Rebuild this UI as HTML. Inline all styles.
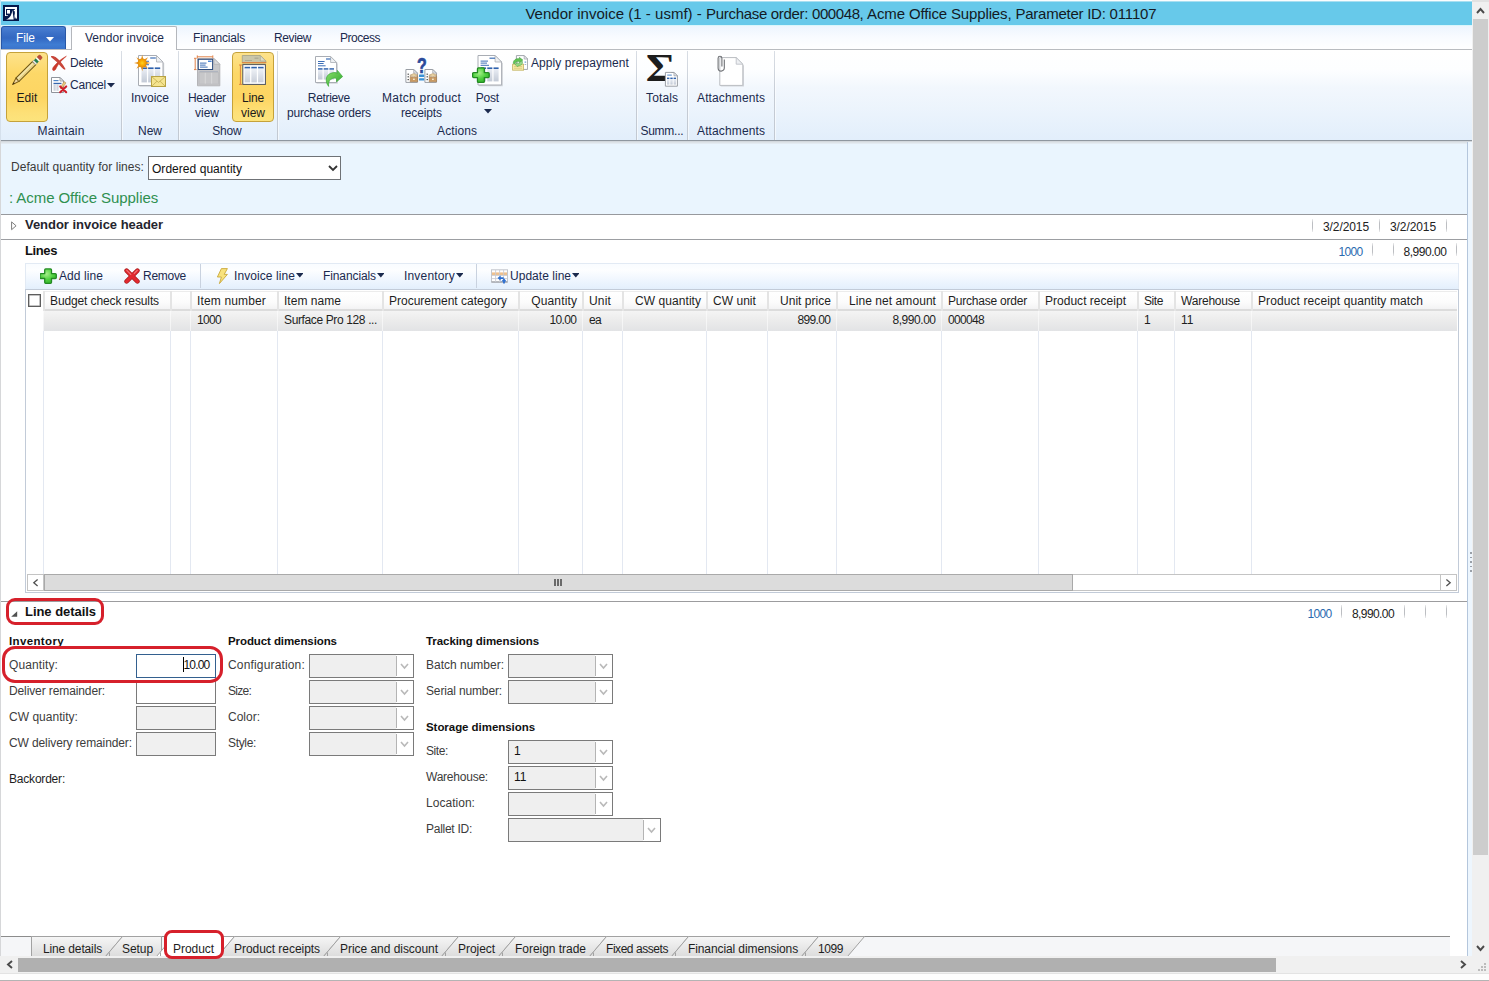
<!DOCTYPE html>
<html lang="en">
<head>
<meta charset="utf-8">
<title>Vendor invoice (1 - usmf) - Purchase order: 000048, Acme Office Supplies, Parameter ID: 011107</title>
<style>
html,body{margin:0;padding:0;}
body{width:1489px;height:981px;overflow:hidden;background:#fff;font-family:"Liberation Sans", sans-serif;font-size:12px;color:#1e1e1e;position:relative;}
#app{position:absolute;left:0;top:0;width:1489px;height:981px;overflow:hidden;}
#app div,#app span,#app svg{position:absolute;box-sizing:border-box;}
#app span{white-space:pre;}
#app span span{position:static;}

</style>
</head>
<body>
<div id="app">
<div style="left:0px;top:0px;width:1472px;height:26px;background:#67c9ea;"></div>
<div style="left:0px;top:0px;width:1489px;height:1px;background:#fbfdfe;"></div>
<div style="left:0px;top:1px;width:1472px;height:1px;background:#a9dff1;"></div>
<div style="left:0px;top:25px;width:1472px;height:1px;background:#d9f6fb;"></div>
<div style="left:0px;top:0px;width:1px;height:981px;background:linear-gradient(#c4e8f6 26px,#d5e0ec 26px,#d5e0ec 140px,#d6d7d9 140px);"></div>
<svg style="left:3px;top:5px" width="16" height="16" viewBox="0 0 16 16"><rect width="16" height="16" fill="#04184a"/><path d="M2 2h12v8.5l-1 2.5-1.2-1.5V4H3v6.2h2.4L4.5 11H2z" fill="#fff"/><rect x="4" y="5" width="3" height="3.6" fill="#fff"/><path d="M3 14.5c4-1.5 5.5-4 6.4-9.5l1.3 9.5z" fill="#fff"/><rect x="10.8" y="5" width="1.2" height="1.2" fill="#fff"/><rect x="11.6" y="9.5" width="1" height="4" fill="#fff"/><rect x="13" y="10" width="1" height="3.6" fill="#fff"/></svg>
<span style="left:525.4px;top:4px;line-height:20px;font-size:15px;color:#141a24;"><span style="letter-spacing:0.02px">Vendor invoice (1 - usmf) - </span><span style="letter-spacing:-0.31px">Purchase order: </span><span style="letter-spacing:-0.41px">000048, </span><span style="letter-spacing:-0.14px">Acme Office Supplies, </span><span style="letter-spacing:-0.25px">Parameter ID: </span><span style="letter-spacing:-0.14px">011107</span></span>
<div style="left:1px;top:26px;width:1471px;height:24px;background:linear-gradient(#edf5fe,#f8fbff 45%,#ffffff);"></div>
<div style="left:1px;top:50px;width:1471px;height:90px;background:linear-gradient(#ffffff,#fdfeff 22%,#f2f7fd 42%,#eaf3fc 72%,#e2eefb);"></div>
<div style="left:1px;top:49px;width:1471px;height:1px;background:#b9bcc0;"></div>
<div style="left:1px;top:140px;width:1471px;height:1px;background:#8f979f;"></div>
<div style="left:1px;top:141px;width:1471px;height:1px;background:#d3d8dd;"></div>
<div style="left:1px;top:142px;width:1471px;height:1px;background:#dde3e8;"></div>
<div style="left:1px;top:143px;width:1471px;height:1px;background:#e4ebf2;"></div>
<div style="left:1px;top:26px;width:65px;height:23px;border-radius:3px 3px 0 0;background:linear-gradient(#4b80d2,#3b70c7 30%,#3368c2 50%,#3f7dd3 80%,#3b74cb);border:1px solid #2857a6;border-bottom:none;"></div>
<span style="left:15.96px;top:30px;line-height:16px;color:#ffffff;letter-spacing:-0.09px;">File</span>
<svg style="left:46px;top:37px" width="8" height="5" viewBox="0 0 8 5"><path d="M0 0h8L4 4.5z" fill="#fff"/></svg>
<div style="left:71px;top:26px;width:106px;height:24px;background:#fff;border:1px solid #b4b7bc;border-bottom:none;border-radius:2px 2px 0 0;"></div>
<span style="left:85px;top:30px;line-height:16px;color:#1b2a4e;letter-spacing:0.02px;">Vendor invoice</span>
<span style="left:193px;top:30px;line-height:16px;color:#1b2a4e;letter-spacing:-0.2px;">Financials</span>
<span style="left:274px;top:30px;line-height:16px;color:#1b2a4e;letter-spacing:-0.39px;">Review</span>
<span style="left:340px;top:30px;line-height:16px;color:#1b2a4e;letter-spacing:-0.48px;">Process</span>
<div style="left:121px;top:51px;width:1px;height:89px;background:linear-gradient(#d9dee5,#c6ccd5 50%,#c2c9d2);"></div>
<div style="left:122px;top:51px;width:1px;height:89px;background:rgba(255,255,255,.55);"></div>
<div style="left:178px;top:51px;width:1px;height:89px;background:linear-gradient(#d9dee5,#c6ccd5 50%,#c2c9d2);"></div>
<div style="left:179px;top:51px;width:1px;height:89px;background:rgba(255,255,255,.55);"></div>
<div style="left:277px;top:51px;width:1px;height:89px;background:linear-gradient(#d9dee5,#c6ccd5 50%,#c2c9d2);"></div>
<div style="left:278px;top:51px;width:1px;height:89px;background:rgba(255,255,255,.55);"></div>
<div style="left:636px;top:51px;width:1px;height:89px;background:linear-gradient(#d9dee5,#c6ccd5 50%,#c2c9d2);"></div>
<div style="left:637px;top:51px;width:1px;height:89px;background:rgba(255,255,255,.55);"></div>
<div style="left:687px;top:51px;width:1px;height:89px;background:linear-gradient(#d9dee5,#c6ccd5 50%,#c2c9d2);"></div>
<div style="left:688px;top:51px;width:1px;height:89px;background:rgba(255,255,255,.55);"></div>
<div style="left:774px;top:51px;width:1px;height:89px;background:linear-gradient(#d9dee5,#c6ccd5 50%,#c2c9d2);"></div>
<div style="left:775px;top:51px;width:1px;height:89px;background:rgba(255,255,255,.55);"></div>
<div style="left:6px;top:52px;width:42px;height:70px;background:linear-gradient(#fde28c,#fdd868 30%,#fdd562 65%,#fde077 88%,#fce47c);border:1px solid #c5a23a;border-radius:4px;"></div>
<svg style="left:10px;top:53px" width="36" height="36" viewBox="0 0 36 36"><g transform="translate(2.6,31.6) rotate(-45)"><path d="M0 0L7 -2.2V2.2z" fill="#f0d6a2" stroke="#7c5d14" stroke-width="1" stroke-linejoin="round"/><path d="M0 0L2.4 -.8V.8z" fill="#3a2a10"/><rect x="7" y="-2.2" width="23.4" height="4.4" fill="#f5e6a8" stroke="#6f5716" stroke-width="1.1"/><rect x="7" y=".3" width="23.4" height="1.4" fill="#e6cf80"/><rect x="30.4" y="-2.2" width="2" height="4.4" fill="#e6e8e4" stroke="#8a8a80" stroke-width=".5"/><rect x="32.4" y="-2.2" width="2.6" height="4.4" fill="#1f7d50"/><rect x="35" y="-2.2" width="1.8" height="4.4" fill="#f4f4f0"/><path d="M36.8 -2.2h2a1.6 1.6 0 0 1 1.6 1.6v1.2a1.6 1.6 0 0 1 -1.6 1.6h-2z" fill="#bf4a3a" stroke="#9a4a30" stroke-width=".4"/></g></svg>
<svg style="left:50px;top:55px" width="18" height="17" viewBox="0 0 18 17"><path d="M16.4 1.2C12.5 3 6.5 7.6 3 12.6 2 14.4 2.6 16 4 15.6 5.4 15.2 6 13.6 6.6 12.4 8.6 8.6 12 4.8 16.4 1.2z" fill="#c93a2c" stroke="#c93a2c" stroke-width=".5" stroke-linejoin="round"/><path d="M1.6 1.6C3.6 1.4 6.2 2.8 8.8 5.8 11.2 8.6 13.4 11.6 14.8 14 14 14 13 13 12 11.8 9.4 8.6 6 4.8 1.6 1.6z" fill="#c8463a" stroke="#c8463a" stroke-width="1.3" stroke-linejoin="round"/></svg>
<svg style="left:51px;top:77px" width="17" height="17" viewBox="0 0 17 17"><path d="M0.5 0.5H9.0L12.5 4.0V15.5H0.5z" fill="#fff" stroke="#8f949b" stroke-width="1"/><path d="M9.0 0.5V4.0H12.5z" fill="#eef0f3" stroke="#8f949b" stroke-width="0.8" stroke-linejoin="round"/><rect x="2.5" y="3" width="5.0" height="1.2" fill="#4f86c8"/><rect x="2.5" y="5.8" width="8" height="1.3" fill="#3567ae"/><rect x="2.5" y="7.3" width="2.2" height="6.5" fill="#cfd5de"/><rect x="5.4" y="7.3" width="2.2" height="6.5" fill="#cfd5de"/><path d="M13 4.5l2 1.4-4 5.6-1.6.4.2-1.6z" fill="#e6c97a" stroke="#b07a4a" stroke-width=".5"/><path d="M9.2 9.4l6 5.8M15.2 9.4l-6 5.8" stroke="#cf1f2a" stroke-width="2.1" stroke-linecap="round"/></svg>
<svg style="left:134px;top:54px" width="33" height="34" viewBox="0 0 33 34"><path d="M5.5 32.1H29.6V9.0" fill="none" stroke="#c9ccd1" stroke-width="1.2" opacity=".8"/><path d="M4.5 1.5H22.5L29 8.0V31.5H4.5z" fill="#fff" stroke="#a9adb4" stroke-width="1"/><path d="M22.5 1.5V8.0H29z" fill="#eef0f3" stroke="#a9adb4" stroke-width="0.8" stroke-linejoin="round"/><rect x="16.2" y="3.4" width="5.600000000000001" height="1.2" fill="#3e6fb6"/><rect x="10.5" y="6.8" width="4.5" height="1" fill="#3e6fb6"/><rect x="10.5" y="10.2" width="4.5" height="1" fill="#3e6fb6"/><defs><linearGradient id="tbi" x1="0" y1="0" x2="0" y2="1"><stop offset="0" stop-color="#e9edf4"/><stop offset="1" stop-color="#c3cad6"/></linearGradient></defs><rect x="7.50" y="13.4" width="5.43" height="1.6" fill="#2f62ad"/><rect x="7.50" y="15.0" width="5.43" height="13.40" fill="url(#tbi)"/><rect x="14.13" y="13.4" width="5.43" height="1.6" fill="#2f62ad"/><rect x="14.13" y="15.0" width="5.43" height="13.40" fill="url(#tbi)"/><rect x="20.77" y="13.4" width="5.43" height="1.6" fill="#2f62ad"/><rect x="20.77" y="15.0" width="5.43" height="13.40" fill="url(#tbi)"/><defs><radialGradient id="sun"><stop offset="0" stop-color="#ffd21f"/><stop offset=".6" stop-color="#f7a600"/><stop offset="1" stop-color="#e08a10"/></radialGradient></defs><g transform="translate(8.2,9)"><path d="M0 -8.2L1.5 -2.5h-3z" fill="#e39322" transform="rotate(0)"/><path d="M0 -8.2L1.5 -2.5h-3z" fill="#e39322" transform="rotate(45)"/><path d="M0 -8.2L1.5 -2.5h-3z" fill="#e39322" transform="rotate(90)"/><path d="M0 -8.2L1.5 -2.5h-3z" fill="#e39322" transform="rotate(135)"/><path d="M0 -8.2L1.5 -2.5h-3z" fill="#e39322" transform="rotate(180)"/><path d="M0 -8.2L1.5 -2.5h-3z" fill="#e39322" transform="rotate(225)"/><path d="M0 -8.2L1.5 -2.5h-3z" fill="#e39322" transform="rotate(270)"/><path d="M0 -8.2L1.5 -2.5h-3z" fill="#e39322" transform="rotate(315)"/><circle r="4.6" fill="url(#sun)"/></g><rect x="17.5" y="22.5" width="14" height="10" fill="#f5e48f" stroke="#b7a242" stroke-width="1"/><path d="M17.8 22.8l6.7 5.6 6.7-5.6M17.8 32.2l5.2-5M31.2 32.2l-5.2-5" fill="none" stroke="#c2ad50" stroke-width=".8"/></svg>
<svg style="left:194px;top:55px" width="27" height="32" viewBox="0 0 27 32"><path d="M3.5 3.5H20l5.8 5.8V30.8H3.5z" fill="#c7c7c9" stroke="#b4b4b7" stroke-width="1"/><path d="M20 3.5V9.3h5.8z" fill="#d9d9db" stroke="#b4b4b7" stroke-width=".8"/><rect x="5.5" y="16" width="18.5" height="1.3" fill="#aeb4bf"/><path d="M11.3 17.3V29M17.6 17.3V29" stroke="#d6d6d8" stroke-width="1.1"/><rect x="5" y="17.3" width="19.4" height="11.8" fill="none" stroke="#bbbbbe" stroke-width=".8"/><rect x="4.3" y="4.3" width="14.3" height="10.2" fill="#fff" stroke="#2f4d7e" stroke-width="1"/><rect x="14" y="5.6" width="3.6" height="1.3" fill="#3d7bd0"/><rect x="6" y="7.6" width="6.5" height="1" fill="#3e6fb6"/><rect x="6" y="9.6" width="5.6" height="1" fill="#3e6fb6"/><rect x="6" y="11.6" width="7.6" height="1" fill="#3e6fb6"/><path d="M3.3 1.8H18.8M3.3 .4V3.2M18.8 .4V3.2M1.2 3.3V14.6M0 3.3H2.6M0 14.6H2.6" stroke="#e0834a" stroke-width="1" fill="none"/></svg>
<span style="left:16.54px;top:90px;line-height:16px;color:#1a1a1a;letter-spacing:0.08px;">Edit</span>
<span style="left:70px;top:55px;line-height:16px;color:#1b2a4e;letter-spacing:-0.28px;">Delete</span>
<span style="left:70px;top:77px;line-height:16px;color:#1b2a4e;letter-spacing:-0.23px;">Cancel</span>
<span style="left:37.6px;top:123px;line-height:16px;color:#1b2a4e;letter-spacing:0.21px;">Maintain</span>
<span style="left:131px;top:90px;line-height:16px;color:#1b2a4e;">Invoice</span>
<span style="left:138px;top:123px;line-height:16px;color:#1b2a4e;letter-spacing:-0.01px;">New</span>
<span style="left:187.89px;top:90px;line-height:16px;color:#1b2a4e;letter-spacing:-0.23px;">Header</span>
<span style="left:195px;top:105px;line-height:16px;color:#1b2a4e;">view</span>
<div style="left:232px;top:52px;width:42px;height:70px;background:linear-gradient(#fde28c,#fdd868 30%,#fdd562 65%,#fde077 88%,#fce47c);border:1px solid #c5a23a;border-radius:4px;"></div>
<svg style="left:239px;top:54px" width="29" height="32" viewBox="0 0 29 32"><path d="M3.3 1.5H21.3l5.5 5.5V9H3.3z" fill="#c9c6aa" stroke="#a9a68a" stroke-width=".9"/><path d="M21.3 1.5V7h5.5z" fill="#dddbc6" stroke="#a9a68a" stroke-width=".7"/><rect x="15.5" y="3.6" width="4" height="1.1" fill="#a5a38e"/><rect x="6" y="6" width="7" height="1" fill="#aeab92"/><path d="M3 8.6H27.2M1.4 11V30.4M0 11H3M0 30.4H3" stroke="#e0843c" stroke-width="1" fill="none"/><rect x="4.6" y="11.4" width="22.4" height="19.6" fill="#8a8d92" opacity=".45"/><rect x="3.8" y="10.6" width="22.6" height="19.8" fill="#fff" stroke="#50545b" stroke-width="1"/><defs><linearGradient id="tbl" x1="0" y1="0" x2="0" y2="1"><stop offset="0" stop-color="#eef1f6"/><stop offset="1" stop-color="#c9cfd9"/></linearGradient></defs><rect x="5.60" y="12.8" width="5.53" height="1.8" fill="#2f62ad"/><rect x="5.60" y="14.600000000000001" width="5.53" height="13.80" fill="url(#tbl)"/><rect x="12.33" y="12.8" width="5.53" height="1.8" fill="#2f62ad"/><rect x="12.33" y="14.600000000000001" width="5.53" height="13.80" fill="url(#tbl)"/><rect x="19.07" y="12.8" width="5.53" height="1.8" fill="#2f62ad"/><rect x="19.07" y="14.600000000000001" width="5.53" height="13.80" fill="url(#tbl)"/></svg>
<svg style="left:314px;top:55px" width="30" height="33" viewBox="0 0 30 33"><path d="M2.5 28.1H23.200000000000003V8.5" fill="none" stroke="#c9ccd1" stroke-width="1.2" opacity=".8"/><path d="M1.5 1.5H16.6L22.6 7.5V27.5H1.5z" fill="#fff" stroke="#a9adb4" stroke-width="1"/><path d="M16.6 1.5V7.5H22.6z" fill="#eef0f3" stroke="#a9adb4" stroke-width="0.8" stroke-linejoin="round"/><rect x="12" y="3.4" width="4.5" height="1.2" fill="#3e6fb6"/><rect x="4" y="6" width="6.6" height="1" fill="#3e6fb6"/><rect x="4" y="8" width="5.6" height="1" fill="#3e6fb6"/><rect x="4" y="10.3" width="7.6" height="1" fill="#3e6fb6"/><defs><linearGradient id="tbr" x1="0" y1="0" x2="0" y2="1"><stop offset="0" stop-color="#e9edf4"/><stop offset="1" stop-color="#c3cad6"/></linearGradient></defs><rect x="4.00" y="13.2" width="4.53" height="1.6" fill="#2f62ad"/><rect x="4.00" y="14.799999999999999" width="4.53" height="9.70" fill="url(#tbr)"/><rect x="9.73" y="13.2" width="4.53" height="1.6" fill="#2f62ad"/><rect x="9.73" y="14.799999999999999" width="4.53" height="9.70" fill="url(#tbr)"/><rect x="15.47" y="13.2" width="4.53" height="1.6" fill="#2f62ad"/><rect x="15.47" y="14.799999999999999" width="4.53" height="9.70" fill="url(#tbr)"/><defs><linearGradient id="ga" x1="0" y1="0" x2="1" y2="1"><stop offset="0" stop-color="#8be06a"/><stop offset="1" stop-color="#2da52d"/></linearGradient></defs><path d="M14.6 31.4C10.4 26 11.6 18.6 19.4 17.6 22 17.4 23 18 23.4 18.4V15.4L28.6 21.6 22.6 26.8V23.6C19 22 13.6 24.4 14.6 31.4z" fill="url(#ga)" stroke="#3aa936" stroke-width=".7" stroke-linejoin="round"/></svg>
<svg style="left:405px;top:56px" width="34" height="28" viewBox="0 0 34 28"><path d="M0.9 13.5H8.8L12.4 17.1V26.4H0.9z" fill="#fff" stroke="#9a9ea5" stroke-width="1"/><path d="M8.8 13.5V17.1H12.4z" fill="#eef0f3" stroke="#9a9ea5" stroke-width="0.8" stroke-linejoin="round"/><rect x="2.6" y="17.6" width="1.2" height="1.2" fill="#333"/><rect x="2.6" y="20.2" width="1.2" height="1.2" fill="#333"/><rect x="2.6" y="23" width="1.2" height="1.2" fill="#333"/><path d="M4.800000000000001 19.2l4-1.6 4.2 1.6-4.2 1.6z" fill="#e9d3a4" stroke="#a98454" stroke-width=".5"/><path d="M5.2 20.4v5.4h7.4v-5.4l-3.7 1.2z" fill="#c99a62" stroke="#9a7040" stroke-width=".5"/><rect x="8.0" y="22.6" width="1.8" height="1.4" fill="#f1e6cc"/><path d="M19.9 13.5H27.799999999999997L31.4 17.1V26.4H19.9z" fill="#fff" stroke="#9a9ea5" stroke-width="1"/><path d="M27.799999999999997 13.5V17.1H31.4z" fill="#eef0f3" stroke="#9a9ea5" stroke-width="0.8" stroke-linejoin="round"/><rect x="21.599999999999998" y="17.6" width="1.2" height="1.2" fill="#333"/><rect x="21.599999999999998" y="20.2" width="1.2" height="1.2" fill="#333"/><rect x="21.599999999999998" y="23" width="1.2" height="1.2" fill="#333"/><path d="M23.799999999999997 19.2l4-1.6 4.2 1.6-4.2 1.6z" fill="#e9d3a4" stroke="#a98454" stroke-width=".5"/><path d="M24.2 20.4v5.4h7.4v-5.4l-3.7 1.2z" fill="#c99a62" stroke="#9a7040" stroke-width=".5"/><rect x="27.0" y="22.6" width="1.8" height="1.4" fill="#f1e6cc"/><text transform="translate(16.9,16.7) scale(.74,1)" font-family="Liberation Sans, sans-serif" font-weight="700" font-size="21.5" text-anchor="middle" fill="#2b4a9a" stroke="#2b4a9a" stroke-width=".7" stroke-linejoin="round">?</text><rect x="14" y="18.6" width="5.2" height="2.3" rx=".5" fill="#3b92d6"/><rect x="14" y="22.2" width="5.2" height="2.3" rx=".5" fill="#3b92d6"/></svg>
<svg style="left:472px;top:54px" width="32" height="33" viewBox="0 0 32 33"><path d="M7 31.6H30.200000000000003V9.0" fill="none" stroke="#c9ccd1" stroke-width="1.2" opacity=".8"/><path d="M6 1.5H23.1L29.6 8.0V31H6z" fill="#fff" stroke="#a9adb4" stroke-width="1"/><path d="M23.1 1.5V8.0H29.6z" fill="#eef0f3" stroke="#a9adb4" stroke-width="0.8" stroke-linejoin="round"/><rect x="17.5" y="3.6" width="5.5" height="1.2" fill="#3e6fb6"/><rect x="8.6" y="6.6" width="7.4" height="1" fill="#3e6fb6"/><rect x="8.6" y="8.6" width="6.4" height="1" fill="#3e6fb6"/><rect x="8.6" y="10.8" width="8.4" height="1" fill="#3e6fb6"/><defs><linearGradient id="tbp" x1="0" y1="0" x2="0" y2="1"><stop offset="0" stop-color="#e9edf4"/><stop offset="1" stop-color="#c3cad6"/></linearGradient></defs><rect x="9.00" y="13.4" width="5.07" height="1.6" fill="#2f62ad"/><rect x="9.00" y="15.0" width="5.07" height="12.40" fill="url(#tbp)"/><rect x="15.27" y="13.4" width="5.07" height="1.6" fill="#2f62ad"/><rect x="15.27" y="15.0" width="5.07" height="12.40" fill="url(#tbp)"/><rect x="21.53" y="13.4" width="5.07" height="1.6" fill="#2f62ad"/><rect x="21.53" y="15.0" width="5.07" height="12.40" fill="url(#tbp)"/><defs><radialGradient id="pgp" cx=".4" cy=".35" r=".8"><stop offset="0" stop-color="#a6f08a"/><stop offset=".5" stop-color="#4fd03f"/><stop offset="1" stop-color="#2aa828"/></radialGradient></defs><path d="M6.47 13.8h4.87a1 1 0 0 1 1 1v3.87h3.87a1 1 0 0 1 1 1v2.87a1 1 0 0 1 -1 1h-3.87v3.87a1 1 0 0 1 -1 1h-4.87a1 1 0 0 1 -1 -1v-3.87h-3.87a1 1 0 0 1 -1 -1v-2.87a1 1 0 0 1 1 -1h3.87v-3.87a1 1 0 0 1 1 -1z" fill="url(#pgp)" stroke="#238a23" stroke-width="1.3" stroke-linejoin="round"/></svg>
<svg style="left:512px;top:55px" width="16" height="16" viewBox="0 0 16 16"><path d="M4.4 0.6H12.2L15.6 4.0V14.4H4.4z" fill="#fff" stroke="#a2a6ad" stroke-width="1"/><path d="M12.2 0.6V4.0H15.6z" fill="#eef0f3" stroke="#a2a6ad" stroke-width="0.8" stroke-linejoin="round"/><rect x="12.6" y="6.6" width="1.6" height="1" fill="#4f86c8"/><rect x="12.6" y="9" width="1.6" height="1" fill="#9db4d0"/><rect x=".6" y="9.2" width="11" height="6" fill="#f5e9a6" stroke="#c4b463" stroke-width=".8"/><rect x="2" y="11" width="8" height=".9" fill="#dccd80"/><rect x="2" y="12.8" width="8" height=".9" fill="#dccd80"/><path d="M1.4 8.6C1 5.4 3.8 3.2 7.4 3.8V2.4L10.8 5 7.4 7.8V6.4C5.4 6 3.6 6.8 3.2 8.6z" fill="#62c552" stroke="#3b9a37" stroke-width=".6" stroke-linejoin="round"/><path d="M10.6 6.4C11 9 9 11 6 10.6V11.8L3 9.6 6 7.4V8.6C7.6 8.8 8.8 8 9 6.4z" fill="#8fd982" stroke="#4aa545" stroke-width=".5" stroke-linejoin="round" opacity=".9"/></svg>
<svg style="left:646px;top:54px" width="33" height="33" viewBox="0 0 33 33"><text x="-.3" y="27.4" font-family="Liberation Serif, serif" font-weight="700" font-size="39" textLength="29.6" lengthAdjust="spacingAndGlyphs" fill="#1d1d1d">Σ</text><path d="M19.4 18.4H28.0L31.4 21.799999999999997V32.2H19.4z" fill="#fff" stroke="#9a9ea5" stroke-width="1"/><path d="M28.0 18.4V21.799999999999997H31.4z" fill="#eef0f3" stroke="#9a9ea5" stroke-width="0.8" stroke-linejoin="round"/><rect x="21.2" y="20.6" width="4.6" height="1" fill="#4f86c8"/><defs><linearGradient id="tbt" x1="0" y1="0" x2="0" y2="1"><stop offset="0" stop-color="#e9edf4"/><stop offset="1" stop-color="#c3cad6"/></linearGradient></defs><rect x="21.00" y="23.6" width="2.40" height="1.5" fill="#2f62ad"/><rect x="21.00" y="25.1" width="2.40" height="5.50" fill="url(#tbt)"/><rect x="24.30" y="23.6" width="2.40" height="1.5" fill="#2f62ad"/><rect x="24.30" y="25.1" width="2.40" height="5.50" fill="url(#tbt)"/><rect x="27.60" y="23.6" width="2.40" height="1.5" fill="#2f62ad"/><rect x="27.60" y="25.1" width="2.40" height="5.50" fill="url(#tbt)"/></svg>
<svg style="left:716px;top:54px" width="28" height="33" viewBox="0 0 28 33"><path d="M4.8 32.0H27.400000000000002V11.2" fill="none" stroke="#c9ccd1" stroke-width="1.2" opacity=".8"/><path d="M3.8 3.6H20.200000000000003L26.8 10.2V31.4H3.8z" fill="#fff" stroke="#b9bcc1" stroke-width="1"/><path d="M20.200000000000003 3.6V10.2H26.8z" fill="#eef0f3" stroke="#b9bcc1" stroke-width="0.8" stroke-linejoin="round"/><path d="M5.9 12.4V4.2a1.9 1.9 0 0 0 -3.8 0V14a3.1 3.1 0 0 0 6.2 0V5.4" fill="none" stroke="#6e7074" stroke-width="1.1"/></svg>
<span style="left:241.91px;top:90px;line-height:16px;color:#1a1a1a;letter-spacing:-0.17px;">Line</span>
<span style="left:241px;top:105px;line-height:16px;color:#1a1a1a;">view</span>
<span style="left:212.37px;top:123px;line-height:16px;color:#1b2a4e;letter-spacing:-0.26px;">Show</span>
<span style="left:307.83px;top:90px;line-height:16px;color:#1b2a4e;letter-spacing:-0.34px;">Retrieve</span>
<span style="left:286.91px;top:105px;line-height:16px;color:#1b2a4e;letter-spacing:-0.18px;">purchase orders</span>
<span style="left:382.11px;top:90px;line-height:16px;color:#1b2a4e;letter-spacing:0.23px;">Match product</span>
<span style="left:400.94px;top:105px;line-height:16px;color:#1b2a4e;letter-spacing:-0.13px;">receipts</span>
<span style="left:475.87px;top:90px;line-height:16px;color:#1b2a4e;letter-spacing:-0.25px;">Post</span>
<span style="left:531px;top:55px;line-height:16px;color:#1b2a4e;letter-spacing:0.08px;">Apply prepayment</span>
<span style="left:437.05px;top:123px;line-height:16px;color:#1b2a4e;letter-spacing:0.09px;">Actions</span>
<span style="left:646.05px;top:90px;line-height:16px;color:#1b2a4e;letter-spacing:0.11px;">Totals</span>
<span style="left:640.38px;top:123px;line-height:16px;color:#1b2a4e;letter-spacing:-0.24px;">Summ...</span>
<span style="left:697.06px;top:90px;line-height:16px;color:#1b2a4e;letter-spacing:0.12px;">Attachments</span>
<span style="left:697.06px;top:123px;line-height:16px;color:#1b2a4e;letter-spacing:0.12px;">Attachments</span>
<svg style="left:107px;top:83px" width="8" height="5.0" viewBox="0 0 8 5.0"><path d="M0 0h8L4.0 4.5z" fill="#1b2a4e"/></svg>
<svg style="left:483.6px;top:109px" width="8" height="5.0" viewBox="0 0 8 5.0"><path d="M0 0h8L4.0 4.5z" fill="#1b2a4e"/></svg>
<div style="left:1px;top:144px;width:1467px;height:70px;background:#eaf5fe;"></div>
<div style="left:1467px;top:142px;width:1px;height:815px;background:#b4c6dc;"></div>
<div style="left:1468px;top:142px;width:5px;height:815px;background:#edf6fe;"></div>
<span style="left:11px;top:159px;line-height:16px;color:#3a3a3a;letter-spacing:0.03px;">Default quantity for lines:</span>
<div style="left:148px;top:156px;width:193px;height:24px;background:#fff;border:1px solid #6f7276;"></div>
<span style="left:152px;top:160.5px;line-height:16px;color:#111;letter-spacing:0.04px;">Ordered quantity</span>
<svg style="left:328px;top:165px" width="10" height="7" viewBox="0 0 10 7"><path d="M1 1l4 4 4-4" fill="none" stroke="#333" stroke-width="1.8"/></svg>
<span style="left:9px;top:188px;line-height:20px;font-size:15px;color:#2f9050;letter-spacing:-0.07px;">: Acme Office Supplies</span>
<div style="left:1px;top:214px;width:1466px;height:1px;background:#97999d;"></div>
<div style="left:1px;top:215px;width:1466px;height:24px;background:#fff;"></div>
<svg style="left:10.6px;top:221px" width="6" height="10" viewBox="0 0 6 10"><path d="M.6 .9L5.1 4.8 .6 8.7z" fill="#fff" stroke="#7d7d7d" stroke-width="1"/></svg>
<span style="left:25px;top:216.2px;line-height:18px;font-size:13px;font-weight:700;color:#25252e;letter-spacing:-0.03px;">Vendor invoice header</span>
<div style="left:1312px;top:219px;width:1px;height:13px;background:linear-gradient(rgba(190,192,196,.3),#bcbec2 30%,#bcbec2 70%,rgba(190,192,196,.3));"></div>
<div style="left:1379px;top:219px;width:1px;height:13px;background:linear-gradient(rgba(190,192,196,.3),#bcbec2 30%,#bcbec2 70%,rgba(190,192,196,.3));"></div>
<div style="left:1446px;top:219px;width:1px;height:13px;background:linear-gradient(rgba(190,192,196,.3),#bcbec2 30%,#bcbec2 70%,rgba(190,192,196,.3));"></div>
<span style="left:1323px;top:218.5px;line-height:16px;color:#222;letter-spacing:-0.09px;">3/2/2015</span>
<span style="left:1390px;top:218.5px;line-height:16px;color:#222;letter-spacing:-0.09px;">3/2/2015</span>
<div style="left:1px;top:239px;width:1466px;height:1px;background:#9c9ea2;"></div>
<span style="left:25px;top:241.6px;line-height:18px;font-size:13px;font-weight:700;color:#111;letter-spacing:-0.39px;">Lines</span>
<span style="left:1338.5px;top:243.5px;line-height:16px;color:#2a6ab0;letter-spacing:-0.68px;">1000</span>
<div style="left:1372px;top:243px;width:1px;height:13px;background:linear-gradient(rgba(190,192,196,.3),#bcbec2 30%,#bcbec2 70%,rgba(190,192,196,.3));"></div>
<div style="left:1393px;top:243px;width:1px;height:13px;background:linear-gradient(rgba(190,192,196,.3),#bcbec2 30%,#bcbec2 70%,rgba(190,192,196,.3));"></div>
<div style="left:1456px;top:243px;width:1px;height:13px;background:linear-gradient(rgba(190,192,196,.3),#bcbec2 30%,#bcbec2 70%,rgba(190,192,196,.3));"></div>
<span style="left:1403.5px;top:243.5px;line-height:16px;color:#222;letter-spacing:-0.46px;">8,990.00</span>
<div style="left:25px;top:263px;width:1434px;height:26px;background:linear-gradient(#f9fcff,#fdfeff 25%,#edf5fe 70%,#e3effc);border:1px solid #e2eaf4;border-bottom:none;"></div>
<svg style="left:39.5px;top:267.5px" width="17" height="17" viewBox="0 0 17 17"><defs><radialGradient id="pga" cx=".4" cy=".35" r=".8"><stop offset="0" stop-color="#a6f08a"/><stop offset=".5" stop-color="#4fd03f"/><stop offset="1" stop-color="#2aa828"/></radialGradient></defs><path d="M5.70 0.9h4.80a1 1 0 0 1 1 1v3.80h3.80a1 1 0 0 1 1 1v2.80a1 1 0 0 1 -1 1h-3.80v3.80a1 1 0 0 1 -1 1h-4.80a1 1 0 0 1 -1 -1v-3.80h-3.80a1 1 0 0 1 -1 -1v-2.80a1 1 0 0 1 1 -1h3.80v-3.80a1 1 0 0 1 1 -1z" fill="url(#pga)" stroke="#238a23" stroke-width="1.3" stroke-linejoin="round"/></svg>
<svg style="left:123.7px;top:268px" width="16" height="16" viewBox="0 0 16 16"><path d="M2.6 2.6l10.8 10.8M13.4 2.6L2.6 13.4" stroke="#a81c1c" stroke-width="4.6" stroke-linecap="round"/><path d="M2.6 2.6l10.8 10.8M13.4 2.6L2.6 13.4" stroke="#e2292f" stroke-width="3.2" stroke-linecap="round"/><path d="M2.8 2.4l4 4M13.2 2.4l-3 3" stroke="#f27a7a" stroke-width="1.1" stroke-linecap="round"/></svg>
<svg style="left:216px;top:268px" width="13" height="16" viewBox="0 0 13 16"><path d="M5.4 .6h6L8.2 6.4h3.2L3.4 15.6l2-6.6H1.4z" fill="#f8e27c" stroke="#c9a83a" stroke-width=".9" stroke-linejoin="round"/></svg>
<svg style="left:490.5px;top:268.5px" width="17" height="16" viewBox="0 0 17 16"><rect x=".5" y=".8" width="16" height="12.2" fill="#fff" stroke="#c3c6cc" stroke-width="1"/><path d="M.5 13h16" stroke="#8d9096" stroke-width="1"/><rect x="1" y="3.4" width="15" height="3" fill="#f0c08c"/><path d="M4.6 1v12M8.6 1v12M12.6 1v12M1 6.4h15M1 9.6h15" stroke="#c9ccd2" stroke-width=".9"/><path d="M6.5 9l3.2-2.6v1.8h3v1.8h-3v1.8z" fill="#2d6fd0"/><path d="M15.6 11.6l-2.6 3.2-2.6-3.2h1.7V9.4h1.8v2.2z" fill="#2d6fd0" transform="rotate(180 13 12)"/></svg>
<span style="left:59px;top:268px;line-height:16px;color:#1b2a4e;letter-spacing:0.08px;">Add line</span>
<span style="left:143px;top:268px;line-height:16px;color:#1b2a4e;letter-spacing:-0.28px;">Remove</span>
<div style="left:200px;top:264px;width:1px;height:24px;background:#c9d2df;"></div>
<span style="left:234px;top:268px;line-height:16px;color:#1b2a4e;letter-spacing:0.08px;">Invoice line</span>
<svg style="left:295.7px;top:272.6px" width="7.6" height="5.1" viewBox="0 0 7.6 5.1"><path d="M0 0h7.6L3.8 4.6z" fill="#1b2a4e"/></svg>
<span style="left:323px;top:268px;line-height:16px;color:#1b2a4e;letter-spacing:-0.1px;">Financials</span>
<svg style="left:376.7px;top:272.6px" width="7.6" height="5.1" viewBox="0 0 7.6 5.1"><path d="M0 0h7.6L3.8 4.6z" fill="#1b2a4e"/></svg>
<span style="left:404px;top:268px;line-height:16px;color:#1b2a4e;letter-spacing:0.18px;">Inventory</span>
<svg style="left:455.7px;top:272.6px" width="7.6" height="5.1" viewBox="0 0 7.6 5.1"><path d="M0 0h7.6L3.8 4.6z" fill="#1b2a4e"/></svg>
<div style="left:476px;top:264px;width:1px;height:24px;background:#c9d2df;"></div>
<span style="left:510px;top:268px;line-height:16px;color:#1b2a4e;letter-spacing:0.03px;">Update line</span>
<svg style="left:571.7px;top:272.6px" width="7.6" height="5.1" viewBox="0 0 7.6 5.1"><path d="M0 0h7.6L3.8 4.6z" fill="#1b2a4e"/></svg>
<div style="left:25px;top:289px;width:1434px;height:304px;background:#fff;border:1px solid #c2cbd8;"></div>
<div style="left:43px;top:291px;width:1414px;height:20px;background:linear-gradient(#ffffff,#fcfcfc 60%,#f3f3f4);border-bottom:2px solid #dcdcdc;border-top:1px solid #ececec;"></div>
<div style="left:43px;top:311px;width:1414px;height:20px;background:linear-gradient(#f4f4f4,#ececec 45%,#e2e3e5);"></div>
<div style="left:43px;top:331px;width:1px;height:243px;background:#e3e8f1;"></div>
<div style="left:43px;top:311px;width:1px;height:20px;background:rgba(255,255,255,.55);"></div>
<div style="left:43px;top:291px;width:2px;height:20px;background:#e4e4e4;"></div>
<div style="left:170px;top:331px;width:1px;height:243px;background:#e3e8f1;"></div>
<div style="left:170px;top:311px;width:1px;height:20px;background:rgba(255,255,255,.55);"></div>
<div style="left:170px;top:291px;width:2px;height:20px;background:#e4e4e4;"></div>
<div style="left:190px;top:331px;width:1px;height:243px;background:#e3e8f1;"></div>
<div style="left:190px;top:311px;width:1px;height:20px;background:rgba(255,255,255,.55);"></div>
<div style="left:190px;top:291px;width:2px;height:20px;background:#e4e4e4;"></div>
<div style="left:277px;top:331px;width:1px;height:243px;background:#e3e8f1;"></div>
<div style="left:277px;top:311px;width:1px;height:20px;background:rgba(255,255,255,.55);"></div>
<div style="left:277px;top:291px;width:2px;height:20px;background:#e4e4e4;"></div>
<div style="left:382px;top:331px;width:1px;height:243px;background:#e3e8f1;"></div>
<div style="left:382px;top:311px;width:1px;height:20px;background:rgba(255,255,255,.55);"></div>
<div style="left:382px;top:291px;width:2px;height:20px;background:#e4e4e4;"></div>
<div style="left:518px;top:331px;width:1px;height:243px;background:#e3e8f1;"></div>
<div style="left:518px;top:311px;width:1px;height:20px;background:rgba(255,255,255,.55);"></div>
<div style="left:518px;top:291px;width:2px;height:20px;background:#e4e4e4;"></div>
<div style="left:582px;top:331px;width:1px;height:243px;background:#e3e8f1;"></div>
<div style="left:582px;top:311px;width:1px;height:20px;background:rgba(255,255,255,.55);"></div>
<div style="left:582px;top:291px;width:2px;height:20px;background:#e4e4e4;"></div>
<div style="left:622px;top:331px;width:1px;height:243px;background:#e3e8f1;"></div>
<div style="left:622px;top:311px;width:1px;height:20px;background:rgba(255,255,255,.55);"></div>
<div style="left:622px;top:291px;width:2px;height:20px;background:#e4e4e4;"></div>
<div style="left:706px;top:331px;width:1px;height:243px;background:#e3e8f1;"></div>
<div style="left:706px;top:311px;width:1px;height:20px;background:rgba(255,255,255,.55);"></div>
<div style="left:706px;top:291px;width:2px;height:20px;background:#e4e4e4;"></div>
<div style="left:767px;top:331px;width:1px;height:243px;background:#e3e8f1;"></div>
<div style="left:767px;top:311px;width:1px;height:20px;background:rgba(255,255,255,.55);"></div>
<div style="left:767px;top:291px;width:2px;height:20px;background:#e4e4e4;"></div>
<div style="left:836px;top:331px;width:1px;height:243px;background:#e3e8f1;"></div>
<div style="left:836px;top:311px;width:1px;height:20px;background:rgba(255,255,255,.55);"></div>
<div style="left:836px;top:291px;width:2px;height:20px;background:#e4e4e4;"></div>
<div style="left:941px;top:331px;width:1px;height:243px;background:#e3e8f1;"></div>
<div style="left:941px;top:311px;width:1px;height:20px;background:rgba(255,255,255,.55);"></div>
<div style="left:941px;top:291px;width:2px;height:20px;background:#e4e4e4;"></div>
<div style="left:1038px;top:331px;width:1px;height:243px;background:#e3e8f1;"></div>
<div style="left:1038px;top:311px;width:1px;height:20px;background:rgba(255,255,255,.55);"></div>
<div style="left:1038px;top:291px;width:2px;height:20px;background:#e4e4e4;"></div>
<div style="left:1137px;top:331px;width:1px;height:243px;background:#e3e8f1;"></div>
<div style="left:1137px;top:311px;width:1px;height:20px;background:rgba(255,255,255,.55);"></div>
<div style="left:1137px;top:291px;width:2px;height:20px;background:#e4e4e4;"></div>
<div style="left:1174px;top:331px;width:1px;height:243px;background:#e3e8f1;"></div>
<div style="left:1174px;top:311px;width:1px;height:20px;background:rgba(255,255,255,.55);"></div>
<div style="left:1174px;top:291px;width:2px;height:20px;background:#e4e4e4;"></div>
<div style="left:1251px;top:331px;width:1px;height:243px;background:#e3e8f1;"></div>
<div style="left:1251px;top:311px;width:1px;height:20px;background:rgba(255,255,255,.55);"></div>
<div style="left:1251px;top:291px;width:2px;height:20px;background:#e4e4e4;"></div>
<div style="left:28px;top:294px;width:13px;height:13px;background:#fff;border:1px solid #5e5e5e;box-shadow:inset 0 0 0 .5px #8a8a8a;"></div>
<span style="left:50px;top:293px;line-height:16px;letter-spacing:-0.12px;">Budget check results</span>
<span style="left:197px;top:293px;line-height:16px;letter-spacing:0.15px;">Item number</span>
<span style="left:284px;top:293px;line-height:16px;letter-spacing:0.03px;">Item name</span>
<span style="left:389px;top:293px;line-height:16px;">Procurement category</span>
<span style="left:531.16px;top:293px;line-height:16px;letter-spacing:0.16px;">Quantity</span>
<span style="left:589px;top:293px;line-height:16px;letter-spacing:0.16px;">Unit</span>
<span style="left:635.06px;top:293px;line-height:16px;letter-spacing:0.06px;">CW quantity</span>
<span style="left:713px;top:293px;line-height:16px;letter-spacing:0.04px;">CW unit</span>
<span style="left:780.03px;top:293px;line-height:16px;letter-spacing:0.03px;">Unit price</span>
<span style="left:849.06px;top:293px;line-height:16px;letter-spacing:0.06px;">Line net amount</span>
<span style="left:948px;top:293px;line-height:16px;letter-spacing:-0.22px;">Purchase order</span>
<span style="left:1045px;top:293px;line-height:16px;letter-spacing:0.02px;">Product receipt</span>
<span style="left:1144px;top:293px;line-height:16px;letter-spacing:-0.42px;">Site</span>
<span style="left:1181px;top:293px;line-height:16px;letter-spacing:-0.21px;">Warehouse</span>
<span style="left:1258px;top:293px;line-height:16px;letter-spacing:0.1px;">Product receipt quantity match</span>
<span style="left:197px;top:312px;line-height:16px;letter-spacing:-0.68px;">1000</span>
<span style="left:284px;top:312px;line-height:16px;letter-spacing:-0.37px;">Surface Pro 128 ...</span>
<span style="left:549.39px;top:312px;line-height:16px;letter-spacing:-0.61px;">10.00</span>
<span style="left:589px;top:312px;line-height:16px;letter-spacing:-0.68px;">ea</span>
<span style="left:797.38px;top:312px;line-height:16px;letter-spacing:-0.62px;">899.00</span>
<span style="left:892.54px;top:312px;line-height:16px;letter-spacing:-0.46px;">8,990.00</span>
<span style="left:948px;top:312px;line-height:16px;letter-spacing:-0.67px;">000048</span>
<span style="left:1144px;top:312px;line-height:16px;">1</span>
<span style="left:1181px;top:312px;line-height:16px;letter-spacing:-0.03px;">11</span>
<div style="left:27px;top:574px;width:1430px;height:17px;background:#fff;border:1px solid #c4c4c4;"></div>
<div style="left:43px;top:575px;width:1px;height:15px;background:#c4c4c4;"></div>
<div style="left:44px;top:574px;width:1029px;height:17px;background:#dcdcdc;border:1px solid #a9a9a9;"></div>
<div style="left:1440px;top:575px;width:1px;height:15px;background:#c4c4c4;"></div>
<svg style="left:32px;top:578px" width="8" height="10" viewBox="0 0 8 10"><path d="M5.6 1.4L1.8 4.7l3.8 3.3" fill="none" stroke="#505050" stroke-width="1.3"/></svg>
<svg style="left:1444px;top:578px" width="8" height="10" viewBox="0 0 8 10"><path d="M2.4 1.4l3.8 3.3-3.8 3.3" fill="none" stroke="#505050" stroke-width="1.3"/></svg>
<div style="left:554px;top:579px;width:2px;height:7px;background:#6a6a6a;"></div>
<div style="left:557px;top:579px;width:2px;height:7px;background:#6a6a6a;"></div>
<div style="left:560px;top:579px;width:2px;height:7px;background:#6a6a6a;"></div>
<div style="left:1px;top:601px;width:1466px;height:1px;background:#9c9c9e;"></div>
<svg style="left:11px;top:611px" width="7" height="6" viewBox="0 0 7 6"><path d="M6.2 .2v5.6h-6z" fill="#505050"/></svg>
<span style="left:25px;top:603px;line-height:18px;font-size:13px;font-weight:700;color:#111;letter-spacing:-0.04px;">Line details</span>
<span style="left:1307.5px;top:605.5px;line-height:16px;color:#2a6ab0;letter-spacing:-0.68px;">1000</span>
<span style="left:1352px;top:605.5px;line-height:16px;color:#222;letter-spacing:-0.59px;">8,990.00</span>
<div style="left:1341px;top:605px;width:1px;height:13px;background:linear-gradient(rgba(190,192,196,.3),#bcbec2 30%,#bcbec2 70%,rgba(190,192,196,.3));"></div>
<div style="left:1404px;top:605px;width:1px;height:13px;background:linear-gradient(rgba(190,192,196,.3),#bcbec2 30%,#bcbec2 70%,rgba(190,192,196,.3));"></div>
<div style="left:1425px;top:605px;width:1px;height:13px;background:linear-gradient(rgba(190,192,196,.3),#bcbec2 30%,#bcbec2 70%,rgba(190,192,196,.3));"></div>
<div style="left:1446px;top:605px;width:1px;height:13px;background:linear-gradient(rgba(190,192,196,.3),#bcbec2 30%,#bcbec2 70%,rgba(190,192,196,.3));"></div>
<div style="left:1470px;top:552px;width:2px;height:1.5px;background:#9aa0a8;"></div>
<div style="left:1470px;top:556.5px;width:2px;height:1.5px;background:#9aa0a8;"></div>
<div style="left:1470px;top:561px;width:2px;height:1.5px;background:#9aa0a8;"></div>
<div style="left:1470px;top:565.5px;width:2px;height:1.5px;background:#9aa0a8;"></div>
<div style="left:1470px;top:570px;width:2px;height:1.5px;background:#9aa0a8;"></div>
<span style="left:9px;top:633px;line-height:16px;font-size:11.5px;font-weight:700;color:#111;letter-spacing:0.36px;">Inventory</span>
<span style="left:228px;top:633px;line-height:16px;font-size:11.5px;font-weight:700;color:#111;letter-spacing:-0.09px;">Product dimensions</span>
<span style="left:426px;top:633px;line-height:16px;font-size:11.5px;font-weight:700;color:#111;letter-spacing:-0.07px;">Tracking dimensions</span>
<span style="left:426px;top:719px;line-height:16px;font-size:11.5px;font-weight:700;color:#111;letter-spacing:-0.05px;">Storage dimensions</span>
<span style="left:9px;top:657px;line-height:16px;color:#3c3c3c;letter-spacing:0.11px;">Quantity:</span>
<span style="left:9px;top:683px;line-height:16px;color:#3c3c3c;letter-spacing:-0.11px;">Deliver remainder:</span>
<span style="left:9px;top:709px;line-height:16px;color:#3c3c3c;letter-spacing:0.02px;">CW quantity:</span>
<span style="left:9px;top:735px;line-height:16px;color:#3c3c3c;letter-spacing:-0.11px;">CW delivery remainder:</span>
<div style="left:136px;top:654px;width:80px;height:24px;background:#fff;border:1px solid #33608f;"></div>
<div style="left:136px;top:680px;width:80px;height:24px;background:#fff;border:1px solid #7a7a7a;"></div>
<div style="left:136px;top:706px;width:80px;height:24px;background:#f0f0f0;border:1px solid #7a7a7a;"></div>
<div style="left:136px;top:732px;width:80px;height:24px;background:#f0f0f0;border:1px solid #7a7a7a;"></div>
<div style="left:183px;top:657px;width:1px;height:15px;background:#000;"></div>
<span style="left:183.49px;top:657px;line-height:16px;color:#111;letter-spacing:-0.81px;">10.00</span>
<span style="left:9px;top:771px;line-height:16px;letter-spacing:-0.2px;">Backorder:</span>
<span style="left:228px;top:657px;line-height:16px;color:#3c3c3c;letter-spacing:0.16px;">Configuration:</span>
<div style="left:309px;top:654px;width:105px;height:24px;background:#fff;border:1px solid #7a7a7a;"></div>
<div style="left:310px;top:655px;width:86px;height:22px;background:#efefef;"></div>
<div style="left:396px;top:656px;width:1px;height:20px;background:#b4b4b4;"></div>
<svg style="left:400px;top:663px" width="9" height="7" viewBox="0 0 9 7"><path d="M1 1l3.5 4L8 1" fill="none" stroke="#b9b9b9" stroke-width="1.6"/></svg>
<span style="left:228px;top:683px;line-height:16px;color:#3c3c3c;letter-spacing:-0.74px;">Size:</span>
<div style="left:309px;top:680px;width:105px;height:24px;background:#fff;border:1px solid #7a7a7a;"></div>
<div style="left:310px;top:681px;width:86px;height:22px;background:#efefef;"></div>
<div style="left:396px;top:682px;width:1px;height:20px;background:#b4b4b4;"></div>
<svg style="left:400px;top:689px" width="9" height="7" viewBox="0 0 9 7"><path d="M1 1l3.5 4L8 1" fill="none" stroke="#b9b9b9" stroke-width="1.6"/></svg>
<span style="left:228px;top:709px;line-height:16px;color:#3c3c3c;">Color:</span>
<div style="left:309px;top:706px;width:105px;height:24px;background:#fff;border:1px solid #7a7a7a;"></div>
<div style="left:310px;top:707px;width:86px;height:22px;background:#efefef;"></div>
<div style="left:396px;top:708px;width:1px;height:20px;background:#b4b4b4;"></div>
<svg style="left:400px;top:715px" width="9" height="7" viewBox="0 0 9 7"><path d="M1 1l3.5 4L8 1" fill="none" stroke="#b9b9b9" stroke-width="1.6"/></svg>
<span style="left:228px;top:735px;line-height:16px;color:#3c3c3c;letter-spacing:-0.34px;">Style:</span>
<div style="left:309px;top:732px;width:105px;height:24px;background:#fff;border:1px solid #7a7a7a;"></div>
<div style="left:310px;top:733px;width:86px;height:22px;background:#efefef;"></div>
<div style="left:396px;top:734px;width:1px;height:20px;background:#b4b4b4;"></div>
<svg style="left:400px;top:741px" width="9" height="7" viewBox="0 0 9 7"><path d="M1 1l3.5 4L8 1" fill="none" stroke="#b9b9b9" stroke-width="1.6"/></svg>
<span style="left:426px;top:657px;line-height:16px;color:#3c3c3c;">Batch number:</span>
<div style="left:508px;top:654px;width:105px;height:24px;background:#fff;border:1px solid #7a7a7a;"></div>
<div style="left:509px;top:655px;width:86px;height:22px;background:#efefef;"></div>
<div style="left:595px;top:656px;width:1px;height:20px;background:#b4b4b4;"></div>
<svg style="left:599px;top:663px" width="9" height="7" viewBox="0 0 9 7"><path d="M1 1l3.5 4L8 1" fill="none" stroke="#b9b9b9" stroke-width="1.6"/></svg>
<span style="left:426px;top:683px;line-height:16px;color:#3c3c3c;letter-spacing:-0.15px;">Serial number:</span>
<div style="left:508px;top:680px;width:105px;height:24px;background:#fff;border:1px solid #7a7a7a;"></div>
<div style="left:509px;top:681px;width:86px;height:22px;background:#efefef;"></div>
<div style="left:595px;top:682px;width:1px;height:20px;background:#b4b4b4;"></div>
<svg style="left:599px;top:689px" width="9" height="7" viewBox="0 0 9 7"><path d="M1 1l3.5 4L8 1" fill="none" stroke="#b9b9b9" stroke-width="1.6"/></svg>
<span style="left:426px;top:743px;line-height:16px;color:#3c3c3c;letter-spacing:-0.4px;">Site:</span>
<div style="left:508px;top:740px;width:105px;height:24px;background:#fff;border:1px solid #7a7a7a;"></div>
<div style="left:509px;top:741px;width:86px;height:22px;background:#efefef;"></div>
<div style="left:595px;top:742px;width:1px;height:20px;background:#b4b4b4;"></div>
<svg style="left:599px;top:749px" width="9" height="7" viewBox="0 0 9 7"><path d="M1 1l3.5 4L8 1" fill="none" stroke="#b9b9b9" stroke-width="1.6"/></svg>
<span style="left:514px;top:743px;line-height:16px;color:#111;">1</span>
<span style="left:426px;top:769px;line-height:16px;color:#3c3c3c;letter-spacing:-0.23px;">Warehouse:</span>
<div style="left:508px;top:766px;width:105px;height:24px;background:#fff;border:1px solid #7a7a7a;"></div>
<div style="left:509px;top:767px;width:86px;height:22px;background:#efefef;"></div>
<div style="left:595px;top:768px;width:1px;height:20px;background:#b4b4b4;"></div>
<svg style="left:599px;top:775px" width="9" height="7" viewBox="0 0 9 7"><path d="M1 1l3.5 4L8 1" fill="none" stroke="#b9b9b9" stroke-width="1.6"/></svg>
<span style="left:514px;top:769px;line-height:16px;color:#111;">11</span>
<span style="left:426px;top:795px;line-height:16px;color:#3c3c3c;letter-spacing:0.03px;">Location:</span>
<div style="left:508px;top:792px;width:105px;height:24px;background:#fff;border:1px solid #7a7a7a;"></div>
<div style="left:509px;top:793px;width:86px;height:22px;background:#efefef;"></div>
<div style="left:595px;top:794px;width:1px;height:20px;background:#b4b4b4;"></div>
<svg style="left:599px;top:801px" width="9" height="7" viewBox="0 0 9 7"><path d="M1 1l3.5 4L8 1" fill="none" stroke="#b9b9b9" stroke-width="1.6"/></svg>
<span style="left:426px;top:821px;line-height:16px;color:#3c3c3c;letter-spacing:-0.27px;">Pallet ID:</span>
<div style="left:508px;top:818px;width:153px;height:24px;background:#fff;border:1px solid #7a7a7a;"></div>
<div style="left:509px;top:819px;width:134px;height:22px;background:#efefef;"></div>
<div style="left:643px;top:820px;width:1px;height:20px;background:#b4b4b4;"></div>
<svg style="left:647px;top:827px" width="9" height="7" viewBox="0 0 9 7"><path d="M1 1l3.5 4L8 1" fill="none" stroke="#b9b9b9" stroke-width="1.6"/></svg>
<div style="left:1px;top:936px;width:1449px;height:21px;background:#f5f6f8;"></div>
<div style="left:1px;top:936px;width:1449px;height:1px;background:#8c8c8c;"></div>
<svg style="left:0;top:936px" width="1451" height="21" viewBox="0 0 1451 21"><defs><linearGradient id="tg" x1="0" y1="0" x2="0" y2="1"><stop offset="0" stop-color="#f6f6f6"/><stop offset="1" stop-color="#dcdcdc"/></linearGradient></defs><path d="M31.5 20.5V.5H122.5L105.5 20.5z" fill="url(#tg)" stroke="#a2a2a2" stroke-width="1"/><path d="M105.5 20.5L122.5 .5H161.5V20.5z" fill="url(#tg)" stroke="#a2a2a2" stroke-width="1"/><path d="M109.5 20.5v-4" stroke="#a2a2a2" stroke-width="1"/><path d="M156.5 20.5L173.5 .5H234.5L217.5 20.5z" fill="#ffffff" stroke="#a2a2a2" stroke-width="1"/><path d="M160.5 20.5v-4" stroke="#a2a2a2" stroke-width="1"/><path d="M217.5 20.5L234.5 .5H340.5L323.5 20.5z" fill="url(#tg)" stroke="#a2a2a2" stroke-width="1"/><path d="M221.5 20.5v-4" stroke="#a2a2a2" stroke-width="1"/><path d="M323.5 20.5L340.5 .5H458.5L441.5 20.5z" fill="url(#tg)" stroke="#a2a2a2" stroke-width="1"/><path d="M327.5 20.5v-4" stroke="#a2a2a2" stroke-width="1"/><path d="M441.5 20.5L458.5 .5H515.5L498.5 20.5z" fill="url(#tg)" stroke="#a2a2a2" stroke-width="1"/><path d="M445.5 20.5v-4" stroke="#a2a2a2" stroke-width="1"/><path d="M498.5 20.5L515.5 .5H606.5L589.5 20.5z" fill="url(#tg)" stroke="#a2a2a2" stroke-width="1"/><path d="M502.5 20.5v-4" stroke="#a2a2a2" stroke-width="1"/><path d="M589.5 20.5L606.5 .5H688.5L671.5 20.5z" fill="url(#tg)" stroke="#a2a2a2" stroke-width="1"/><path d="M593.5 20.5v-4" stroke="#a2a2a2" stroke-width="1"/><path d="M671.5 20.5L688.5 .5H818.5L801.5 20.5z" fill="url(#tg)" stroke="#a2a2a2" stroke-width="1"/><path d="M675.5 20.5v-4" stroke="#a2a2a2" stroke-width="1"/><path d="M801.5 20.5L818.5 .5H864.5L847.5 20.5z" fill="url(#tg)" stroke="#a2a2a2" stroke-width="1"/><path d="M805.5 20.5v-4" stroke="#a2a2a2" stroke-width="1"/></svg>
<span style="left:43px;top:941px;line-height:16px;letter-spacing:-0.14px;">Line details</span>
<span style="left:122px;top:941px;line-height:16px;letter-spacing:-0.07px;">Setup</span>
<span style="left:234px;top:941px;line-height:16px;letter-spacing:-0.04px;">Product receipts</span>
<span style="left:340px;top:941px;line-height:16px;letter-spacing:-0.04px;">Price and discount</span>
<span style="left:458px;top:941px;line-height:16px;letter-spacing:-0.05px;">Project</span>
<span style="left:515px;top:941px;line-height:16px;letter-spacing:-0.03px;">Foreign trade</span>
<span style="left:606px;top:941px;line-height:16px;letter-spacing:-0.45px;">Fixed assets</span>
<span style="left:688px;top:941px;line-height:16px;letter-spacing:-0.1px;">Financial dimensions</span>
<span style="left:818px;top:941px;line-height:16px;letter-spacing:-0.43px;">1099</span>
<div style="left:1472px;top:0px;width:17px;height:981px;background:#f0f0f0;"></div>
<div style="left:1472px;top:0px;width:17px;height:2px;background:#e2e2e2;"></div>
<div style="left:1473px;top:19px;width:15px;height:836px;background:#cdcdcd;"></div>
<svg style="left:1476px;top:7px" width="9" height="7" viewBox="0 0 9 7"><path d="M1 6l3.5-4L8 6" fill="none" stroke="#4a4a4a" stroke-width="1.9"/></svg>
<svg style="left:1476px;top:945px" width="9" height="7" viewBox="0 0 9 7"><path d="M1 1l3.5 4L8 1" fill="none" stroke="#4a4a4a" stroke-width="1.9"/></svg>
<div style="left:0px;top:956px;width:1489px;height:18px;background:#f0f0f0;"></div>
<div style="left:18px;top:957.5px;width:1258px;height:14px;background:#b0b0b0;"></div>
<svg style="left:6px;top:960px" width="7" height="9" viewBox="0 0 7 9"><path d="M6 1L2 4.5 6 8" fill="none" stroke="#4a4a4a" stroke-width="1.9"/></svg>
<svg style="left:1460px;top:960px" width="7" height="9" viewBox="0 0 7 9"><path d="M1 1l4 3.5L1 8" fill="none" stroke="#4a4a4a" stroke-width="1.9"/></svg>
<div style="left:0px;top:974px;width:1489px;height:7px;background:#fdfdfd;"></div>
<div style="left:0px;top:973px;width:1489px;height:1px;background:#e3e3e3;"></div>
<div style="left:0px;top:980px;width:1489px;height:1px;background:#b4b4b4;"></div>
<div style="left:1484px;top:963px;width:2px;height:2px;background:#bcbcbc;"></div>
<div style="left:1484px;top:966px;width:2px;height:2px;background:#bcbcbc;"></div>
<div style="left:1484px;top:969px;width:2px;height:2px;background:#bcbcbc;"></div>
<div style="left:1481px;top:966px;width:2px;height:2px;background:#bcbcbc;"></div>
<div style="left:1481px;top:969px;width:2px;height:2px;background:#bcbcbc;"></div>
<div style="left:1478px;top:969px;width:2px;height:2px;background:#bcbcbc;"></div>
<div style="left:6px;top:598px;width:98px;height:27px;border:3px solid #d6202b;border-radius:9px;"></div>
<div style="left:2px;top:646px;width:221px;height:37px;border:3px solid #d6202b;border-radius:13px;"></div>
<div style="left:164px;top:930px;width:60px;height:29px;border:3px solid #d6202b;border-radius:8px;background:#fff;"></div>
<span style="left:173px;top:941px;line-height:16px;letter-spacing:-0.05px;">Product</span>
</div>
</body>
</html>
